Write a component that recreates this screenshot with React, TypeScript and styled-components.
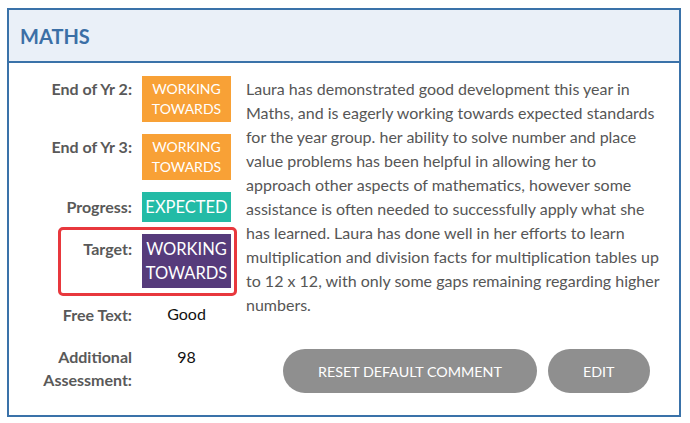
import React from 'react';
import styled, { createGlobalStyle } from 'styled-components';

const GlobalStyle = createGlobalStyle`
  html, body {
    margin: 0;
    padding: 0;
    background: #ffffff;
    font-family: Lato, 'Open Sans', Arial, sans-serif;
  }
`;

const Card = styled.section`
  box-sizing: border-box;
  width: 674px;
  height: 409px;
  margin: 8px 0 0 7px;
  border: 2px solid #3a72a9;
  background: #ffffff;
  display: flex;
  flex-direction: column;
`;

const Header = styled.header`
  height: 51px;
  background: #eaf0f8;
  border-bottom: 2px solid #3a72a9;
  display: flex;
  align-items: center;
  padding-left: 11px;
`;

const Title = styled.h2`
  margin: 0;
  font-size: 20px;
  font-weight: 700;
  color: #3b6fa6;
`;

const Body = styled.div`
  display: flex;
  padding: 13px 13px 22px 13px;
  gap: 15px;
  flex: 1;
`;

const Grades = styled.div`
  display: flex;
  flex-direction: column;
  gap: 12px;
`;

const Row = styled.div<{ $offset?: number }>`
  position: relative;
  display: flex;
  gap: 10px;
  align-items: flex-start;
  margin-top: ${(p) => p.$offset ?? 0}px;
`;

const Label = styled.div<{ $lh: number }>`
  width: 110px;
  padding-top: 3px;
  text-align: right;
  font-size: 16px;
  font-weight: 700;
  line-height: ${(p) => p.$lh}px;
  color: #595959;
`;

const Badge = styled.div<{ $bg: string; $big?: boolean }>`
  width: 89px;
  padding: 3px 0;
  text-align: center;
  background: ${(p) => p.$bg};
  color: #ffffff;
  text-transform: uppercase;
  font-size: ${(p) => (p.$big ? 16.5 : 14)}px;
  line-height: ${(p) => (p.$big ? 24 : 20)}px;
`;

const Value = styled.div<{ $lh: number; $top?: number }>`
  width: 89px;
  padding-top: ${(p) => p.$top ?? 3}px;
  text-align: center;
  font-size: 16px;
  line-height: ${(p) => p.$lh}px;
  color: #111111;
`;

const Highlight = styled.div`
  position: absolute;
  top: -7px;
  bottom: -8px;
  left: 36px;
  right: -6px;
  border: 3px solid #e8383d;
  border-radius: 5px;
  pointer-events: none;
`;

const Comment = styled.div`
  width: 414.5px;
  display: flex;
  flex-direction: column;
`;

const Paragraph = styled.p`
  margin: 1px 0 0;
  font-size: 16px;
  line-height: 24px;
  color: #565656;
`;

const Actions = styled.div`
  display: flex;
  justify-content: flex-end;
  gap: 11px;
  margin-top: 32px;
  padding-right: 11px;
`;

const Pill = styled.button`
  height: 44px;
  padding: 0 35px;
  border: none;
  border-radius: 22px;
  background: #8f8f8f;
  color: #ffffff;
  font-family: Lato, 'Open Sans', Arial, sans-serif;
  font-size: 14.3px;
  text-transform: uppercase;
  cursor: pointer;
`;

const ORANGE = '#f8a136';
const TEAL = '#23bba6';
const PURPLE = '#563b7b';

const comment =
  'Laura has demonstrated good development this year in Maths, and is eagerly working towards expected standards for the year group. her ability to solve number and place value problems has been helpful in allowing her to approach other aspects of mathematics, however some assistance is often needed to successfully apply what she has learned. Laura has done well in her efforts to learn multiplication and division facts for multiplication tables up to 12 x 12, with only some gaps remaining regarding higher numbers.';

export default function App() {
  return (
    <>
      <GlobalStyle />
      <Card>
        <Header>
          <Title>MATHS</Title>
        </Header>
        <Body>
          <Grades>
            <Row>
              <Label $lh={20}>End of Yr 2:</Label>
              <Badge $bg={ORANGE}>Working Towards</Badge>
            </Row>
            <Row>
              <Label $lh={20}>End of Yr 3:</Label>
              <Badge $bg={ORANGE}>Working Towards</Badge>
            </Row>
            <Row>
              <Label $lh={24}>Progress:</Label>
              <Badge $bg={TEAL} $big>Expected</Badge>
            </Row>
            <Row>
              <Label $lh={24}>Target:</Label>
              <Badge $bg={PURPLE} $big>Working Towards</Badge>
              <Highlight />
            </Row>
            <Row>
              <Label $lh={24}>Free Text:</Label>
              <Value $lh={24} $top={2}>Good</Value>
            </Row>
            <Row $offset={3}>
              <Label $lh={23}>Additional Assessment:</Label>
              <Value $lh={23}>98</Value>
            </Row>
          </Grades>
          <Comment>
            <Paragraph>{comment}</Paragraph>
            <Actions>
              <Pill>Reset Default Comment</Pill>
              <Pill>Edit</Pill>
            </Actions>
          </Comment>
        </Body>
      </Card>
    </>
  );
}
